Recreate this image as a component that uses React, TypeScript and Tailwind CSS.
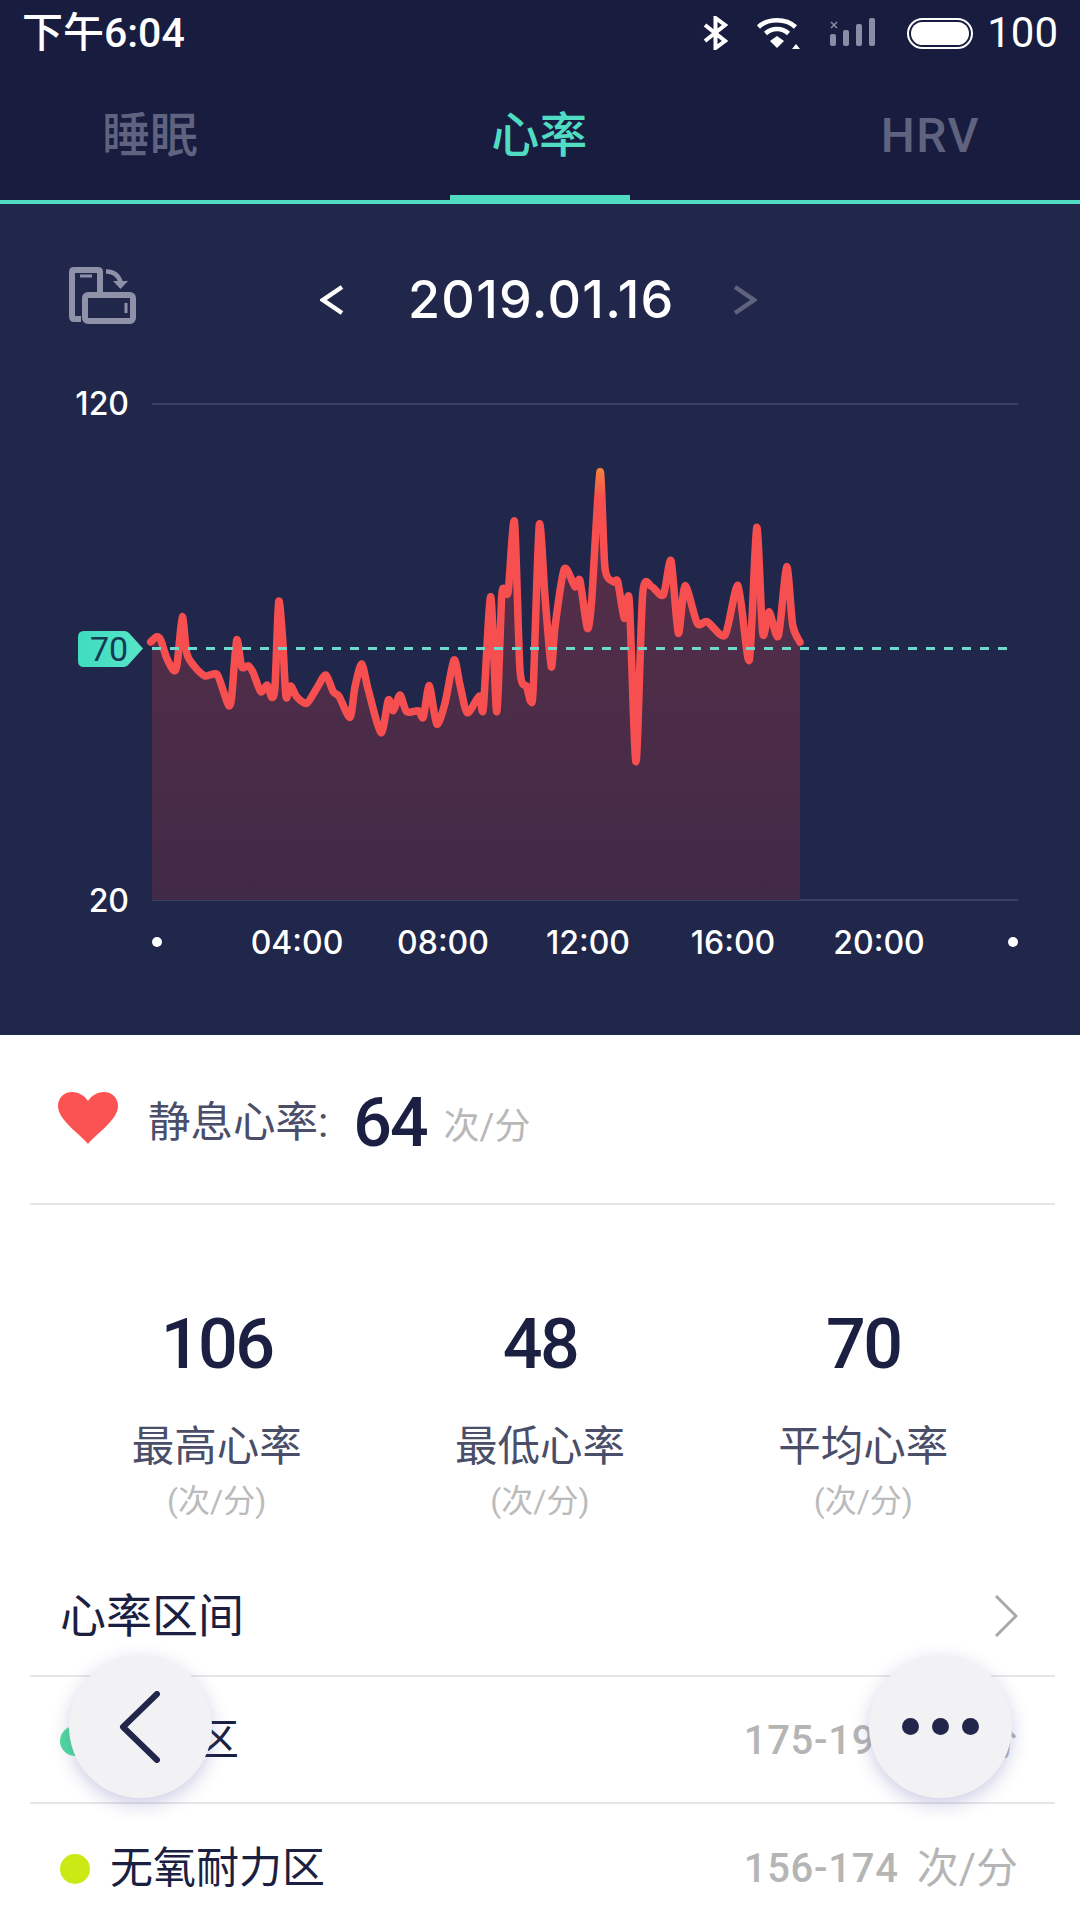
const points: [number, number][] = [
  [150.7, 642], [156.7, 636.7], [160.7, 640], [166.7, 658], [174, 670.7], [177.3, 663], [182.3, 616.7], [186.7, 653],
  [193.3, 665], [205, 676], [216.7, 674], [223, 690], [228.7, 705.7], [231.7, 696.7], [236.7, 640], [241.7, 666.7],
  [248.3, 665.7], [253.3, 673], [260.7, 691.7], [267.3, 685], [271.7, 697.3], [275, 686.7], [278.7, 601.7], [282.7, 640],
  [286, 696.7], [290.7, 686], [296.7, 696.7], [306.7, 703.3], [316.7, 688.3], [325.7, 675], [333.3, 691.7], [339.3, 696.7],
  [350, 717.3], [355, 686.7], [361.7, 664], [368.3, 690], [381, 732.7], [388.3, 700], [393.3, 710.7], [400, 695],
  [406.7, 711.7], [418.3, 710.7], [423.3, 717.3], [429.3, 685.7], [436.7, 724], [445, 703.3], [454, 660], [460, 685],
  [467.3, 712.7], [479.3, 696], [483.3, 708.3], [490.7, 596.7], [496.7, 711.7], [501.7, 596.7], [505, 590.7], [508.3, 590.7],
  [514.5, 521.7], [520, 670], [526.7, 686.7], [530.7, 701.7], [533.3, 686.7], [539.3, 525], [545, 596.7], [551.3, 666.7],
  [555, 626.7], [564.3, 569], [575, 586.7], [580, 580.7], [587.3, 628.3], [591.7, 600], [600, 471.7], [605, 568.3],
  [613.3, 581.7], [617.7, 581.7], [624.3, 618.3], [629.3, 600.7], [636, 761.7], [642.7, 593.3], [651.7, 586.7], [663.3, 595],
  [671, 560.7], [678.3, 633.3], [685, 585.7], [697.3, 623.3], [707.3, 621.7], [725, 635], [738, 585.7], [749.3, 660],
  [756.7, 527.3], [762.7, 633.3], [769, 611.7], [778.3, 636], [786.7, 566.7], [792.7, 625], [800, 642.3],
]

// catmull-rom, kept a bit tight so the spikes don't overshoot
function smooth(pts: [number, number][]) {
  let d = `M${pts[0][0]} ${pts[0][1]}`
  for (let i = 0; i < pts.length - 1; i++) {
    const p0 = pts[i - 1] ?? pts[i]
    const p1 = pts[i]
    const p2 = pts[i + 1]
    const p3 = pts[i + 2] ?? p2
    const c1x = p1[0] + (p2[0] - p0[0]) / 8
    const c1y = p1[1] + (p2[1] - p0[1]) / 8
    const c2x = p2[0] - (p3[0] - p1[0]) / 8
    const c2y = p2[1] - (p3[1] - p1[1]) / 8
    d += `C${c1x} ${c1y} ${c2x} ${c2y} ${p2[0]} ${p2[1]}`
  }
  return d
}

const linePath = smooth(points)
const areaPoints = points.slice(1)
const areaPath = `M152 900L152 640L${smooth(areaPoints).slice(1)}L800 900Z`

const xLabels: [string, number][] = [
  ["04:00", 297],
  ["08:00", 443],
  ["12:00", 588],
  ["16:00", 733],
  ["20:00", 879],
]

const stats = [
  { value: "106", label: "最高心率" },
  { value: "48", label: "最低心率" },
  { value: "70", label: "平均心率" },
]

function StatusBar() {
  return (
    <div className="flex h-[66px] items-center pl-[22px] pr-[22px] text-white">
      <span className="text-[41px] font-medium leading-none">下午6:04</span>
      <div className="ml-auto flex items-center">
        <svg width="25" height="34" viewBox="0 0 25 34" fill="none" stroke="white" strokeWidth="4">
          <path d="M2 9L22 25L12.5 32V2L22 9L2 25" />
        </svg>
        <svg className="ml-[29px]" width="43" height="31" viewBox="0 0 43 31" fill="none" stroke="white">
          <path d="M1.5 9C11 0 29 0 38.5 9" strokeWidth="4.5" />
          <path d="M8.5 15.5C15 9.5 25 9.5 31.5 15.5" strokeWidth="4.5" />
          <path d="M13 23L20 18L27 23L20 30Z" fill="white" stroke="none" />
          <path d="M43 31H35L39 26Z" fill="white" stroke="none" />
        </svg>
        <svg className="ml-[30px]" width="46" height="30" viewBox="0 0 46 30" fill="#8a8da6">
          <path d="M1 4L7 10M7 4L1 10" stroke="#8a8da6" strokeWidth="1.5" />
          <rect x="0" y="16" width="6" height="12" rx="2" />
          <rect x="13" y="12" width="6" height="16" rx="2" />
          <rect x="26" y="6" width="6" height="22" rx="2" />
          <rect x="39" y="0" width="6" height="28" rx="2" />
        </svg>
        <div className="ml-[31px] flex h-[31px] w-[66px] items-center justify-center rounded-full border-2 border-white">
          <div className="h-[23px] w-[58px] rounded-full bg-white" />
        </div>
        <span className="ml-[14px] text-[42px] leading-none">100</span>
      </div>
    </div>
  )
}

function Tabs() {
  return (
    <div className="relative flex h-[138px] items-center justify-between border-b-4 border-[#50dcc2] pl-[102px] pr-[100px] pt-[6px] text-[48px] font-medium leading-none text-[#5f6380]">
      <span>睡眠</span>
      <span className="text-[#50dcc2]">心率</span>
      <span className="tracking-[1.5px]">HRV</span>
      <div className="absolute bottom-[-4px] left-[450px] h-[9px] w-[180px] bg-[#50dcc2]" />
    </div>
  )
}

function DateBar() {
  return (
    <div className="flex h-[176px] items-center pl-[69px] pt-[16px]">
      <svg className="mb-[10px]" width="67" height="57" viewBox="0 0 67 57" fill="none" stroke="#8e91a8" strokeWidth="6">
        <path d="M12 52H5Q3 52 3 49V5Q3 3 5 3H29Q31 3 31 5V26" />
        <path d="M11 9H23" strokeWidth="3" />
        <rect x="16" y="28" width="48" height="26" rx="3" />
        <path d="M57 36V46" strokeWidth="3" />
        <path d="M37 4.500C46 4.500 50 10 51.500 15" strokeWidth="4.500" />
        <path d="M44 14L59 14L51.500 22Z" fill="#8e91a8" stroke="none" />
      </svg>
      <svg className="ml-[184px]" width="24" height="30" viewBox="0 0 24 30" fill="none" stroke="white" strokeWidth="4.500">
        <path d="M22 2L3 15L22 28" />
      </svg>
      <span className="ml-[64px] w-[264px] whitespace-nowrap font-['Inter','Roboto',sans-serif] text-[52px] font-medium leading-none tracking-[1.3px] text-white">2019.01.16</span>
      <svg className="ml-[61px]" width="24" height="30" viewBox="0 0 24 30" fill="none" stroke="#5f6380" strokeWidth="4.500">
        <path d="M2 2L21 15L2 28" />
      </svg>
    </div>
  )
}

function HeartChart() {
  return (
    <svg className="block" width="1080" height="600" viewBox="0 380 1080 600">
      <defs>
        <linearGradient id="area" x1="0" y1="470" x2="0" y2="900" gradientUnits="userSpaceOnUse">
          <stop offset="0" stopColor="#5a2f49" />
          <stop offset="1" stopColor="#412a47" />
        </linearGradient>
        <linearGradient id="line" x1="0" y1="470" x2="0" y2="498" gradientUnits="userSpaceOnUse">
          <stop offset="0" stopColor="#f5803e" />
          <stop offset="1" stopColor="#f74f4f" />
        </linearGradient>
        <linearGradient id="badge" x1="0" y1="0" x2="1" y2="0">
          <stop offset="0" stopColor="#3fdcc0" />
          <stop offset="1" stopColor="#58e4c8" />
        </linearGradient>
      </defs>
      <g stroke="#3a4064" strokeWidth="2">
        <path d="M152 404H1018" />
        <path d="M152 900H1018" />
      </g>
      <path d={areaPath} fill="url(#area)" />
      <path d={linePath} fill="none" stroke="url(#line)" strokeWidth="7.5" strokeLinejoin="round" strokeLinecap="round" />
      <path d="M152 648.500H1010" stroke="#6fdacb" strokeWidth="3" strokeDasharray="9 9" />
      <path d="M84 631H124Q127 631 129 633L143 648.500L129 664Q127 667 124 667H84Q78 667 78 661V637Q78 631 84 631Z" fill="url(#badge)" />
      <text x="109" y="661" textAnchor="middle" fontSize="34" fill="#143a54">70</text>
      <g fontFamily="Inter, Roboto, sans-serif" fontSize="32" fontWeight="500" fill="white">
        <text x="129" y="415" textAnchor="end">120</text>
        <text x="129" y="912" textAnchor="end">20</text>
        {xLabels.map(([label, x]) => (
          <text key={label} x={x} y="954" textAnchor="middle">
            {label}
          </text>
        ))}
      </g>
      <circle cx="157" cy="942" r="5" fill="white" />
      <circle cx="1013" cy="942" r="5" fill="white" />
    </svg>
  )
}

function ZoneRow({ color, name, range }: { color: string; name: string; range: string }) {
  return (
    <div className="flex h-[127px] items-center border-b-2 border-[#e6e6e8] pl-[30px] pr-[37px] pt-[3px] last:border-b-0">
      <span className="h-[30px] w-[30px] rounded-full" style={{ backgroundColor: color }} />
      <span className="ml-[20px] text-[43px] leading-none text-[#1b1f42]">{name}</span>
      <span className="ml-auto text-[40px] font-medium leading-none tracking-[0.7px] text-[#b5b5b5]">{range}</span>
      <span className="ml-[18px] text-[42px] leading-none text-[#b5b5b5]">次/分</span>
    </div>
  )
}

export default function App() {
  return (
    <div className="relative h-[1920px] w-[1080px] overflow-hidden bg-white font-['Roboto','Noto_Sans_CJK_SC',sans-serif]">
      <div className="bg-[#181c3f]">
        <StatusBar />
        <Tabs />
      </div>

      <div className="h-[831px] bg-[#21274a]">
        <DateBar />
        <HeartChart />
      </div>

      <div className="pl-[30px] pr-[25px]">
        <div className="flex h-[170px] items-center border-b-2 border-[#e6e6e8] pl-[28px] pt-[8px]">
          <svg className="mb-[10px]" width="60" height="52" viewBox="0 0 60 52" fill="#fb5252">
            <path d="M30 52C22 42 0 28 0 14C0 6 6 0 14 0C21 0 27 4 30 9C33 4 39 0 46 0C54 0 60 6 60 14C60 28 38 42 30 52Z" />
          </svg>
          <span className="ml-[30px] text-[42.500px] leading-none text-[#4a4e68]">静息心率:</span>
          <span className="ml-[25px] text-[68px] font-medium leading-none tracking-[-2px] text-[#1b1f42]">64</span>
          <span className="ml-[17px] mt-[8px] text-[36px] leading-none text-[#b8b8b8]">次/分</span>
        </div>

        <div className="ml-[25px] mt-[104px] grid w-[970px] grid-cols-3">
          {stats.map((s) => (
            <div key={s.label} className="flex flex-col items-center">
              <span className="text-[70px] font-medium leading-[70px] tracking-[-2.500px] text-[#1b1f42]">{s.value}</span>
              <span className="mt-[47px] text-[42.500px] leading-none text-[#4a4e68]">{s.label}</span>
              <span className="mt-[16px] text-[32px] leading-none text-[#bbbbbb]">(次/分)</span>
            </div>
          ))}
        </div>

        <div className="mt-[52px] flex h-[108px] items-center justify-between border-b-2 border-[#e6e6e8] pb-[12px] pl-[30px] pr-[37px]">
          <span className="text-[46px] leading-none text-[#1b1f42]">心率区间</span>
          <svg width="24" height="44" viewBox="0 0 24 44" fill="none" stroke="#a8a8a8" strokeWidth="3">
            <path d="M2 2L22 22L2 42" />
          </svg>
        </div>

        <ZoneRow color="#4fdc9e" name="极限区" range="175-193" />
        <ZoneRow color="#cbe914" name="无氧耐力区" range="156-174" />
      </div>

      <button className="absolute left-[69px] top-[1655px] flex h-[143px] w-[143px] items-center justify-center rounded-full bg-[#f2f2f4] shadow-[0_6px_18px_rgba(90,90,170,0.3)]">
        <svg className="mr-[2px]" width="42" height="72" viewBox="0 0 42 72" fill="none" stroke="#22264a" strokeWidth="6" strokeLinecap="round" strokeLinejoin="round">
          <path d="M38 3L4 36L38 69" />
        </svg>
      </button>
      <button className="absolute left-[869px] top-[1655px] flex h-[143px] w-[143px] items-center justify-center gap-[13px] rounded-full bg-[#f2f2f4] shadow-[0_6px_18px_rgba(90,90,170,0.3)]">
        <span className="h-[17px] w-[17px] rounded-full bg-[#22264a]" />
        <span className="h-[17px] w-[17px] rounded-full bg-[#22264a]" />
        <span className="h-[17px] w-[17px] rounded-full bg-[#22264a]" />
      </button>
    </div>
  )
}
